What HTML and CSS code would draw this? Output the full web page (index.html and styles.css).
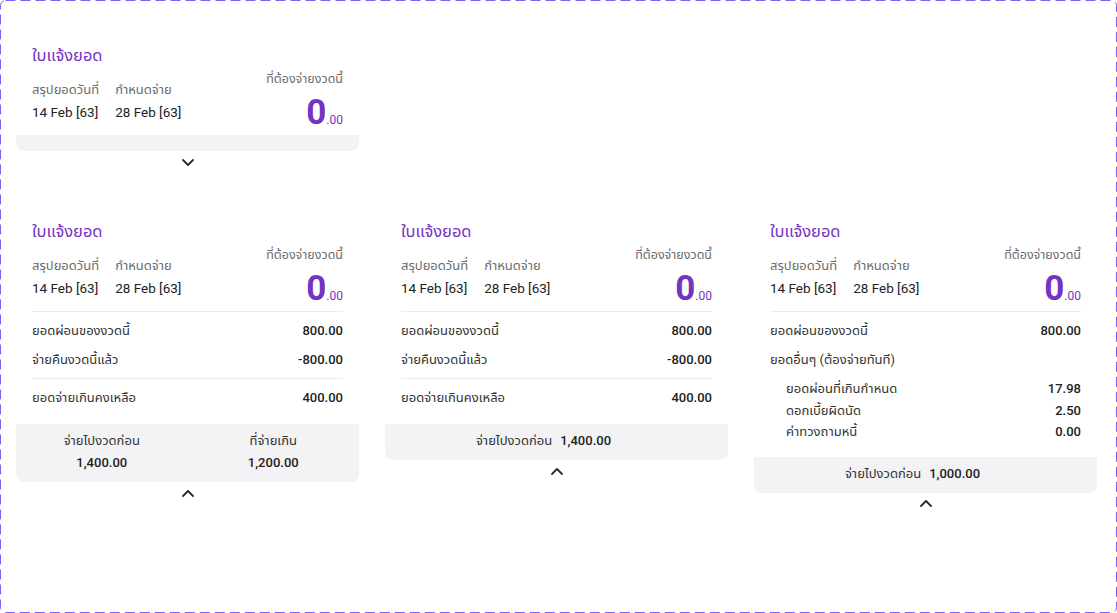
FILE: index.html
```html
<!DOCTYPE html>
<html lang="th">
<head>
  <meta charset="UTF-8" />
  <meta name="viewport" content="width=device-width, initial-scale=1.0"/>
  <title>ใบแจ้งยอด</title>
  <link rel="stylesheet" href="styles.css">
</head>
<body>
  <div class="frame">
    <svg class="frame-border" width="1117" height="613" viewBox="0 0 1117 613">
      <rect x="0.5" y="0.5" width="1116" height="612" rx="5" ry="5" fill="none" stroke="#7b61ff" stroke-width="1" stroke-dasharray="10 5"/>
    </svg>

    <div class="grid">
      <!-- collapsed -->
      <div class="card">
        <div class="card-body">
          <div class="title">ใบแจ้งยอด</div>
          <div class="head">
            <div class="dates">
              <div class="date-col">
                <div class="label">สรุปยอดวันที่</div>
                <div class="date">14 Feb [63]</div>
              </div>
              <div class="date-col">
                <div class="label">กำหนดจ่าย</div>
                <div class="date">28 Feb [63]</div>
              </div>
            </div>
            <div class="due">
              <div class="label">ที่ต้องจ่ายงวดนี้</div>
              <div class="amount">0<span class="dec">.00</span></div>
            </div>
          </div>
        </div>
        <div class="card-foot empty"></div>
        <div class="toggle">
          <svg width="14" height="9" viewBox="0 0 14 9"><path d="M2 2 L7 7 L12 2" fill="none" stroke="#2b2b2b" stroke-width="1.8" stroke-linecap="round" stroke-linejoin="round"/></svg>
        </div>
      </div>
      <div></div>
      <div></div>

      <!-- expanded 1 -->
      <div class="card">
        <div class="card-body">
          <div class="title">ใบแจ้งยอด</div>
          <div class="head">
            <div class="dates">
              <div class="date-col">
                <div class="label">สรุปยอดวันที่</div>
                <div class="date">14 Feb [63]</div>
              </div>
              <div class="date-col">
                <div class="label">กำหนดจ่าย</div>
                <div class="date">28 Feb [63]</div>
              </div>
            </div>
            <div class="due">
              <div class="label">ที่ต้องจ่ายงวดนี้</div>
              <div class="amount">0<span class="dec">.00</span></div>
            </div>
          </div>
          <div class="details">
            <div class="section">
              <div class="row"><span>ยอดผ่อนของงวดนี้</span><span class="val">800.00</span></div>
              <div class="row"><span>จ่ายคืนงวดนี้แล้ว</span><span class="val">-800.00</span></div>
            </div>
            <div class="section">
              <div class="row"><span>ยอดจ่ายเกินคงเหลือ</span><span class="val">400.00</span></div>
            </div>
          </div>
        </div>
        <div class="card-foot split">
          <div class="foot-col">
            <div class="foot-label">จ่ายไปงวดก่อน</div>
            <div class="val">1,400.00</div>
          </div>
          <div class="foot-col">
            <div class="foot-label">ที่จ่ายเกิน</div>
            <div class="val">1,200.00</div>
          </div>
        </div>
        <div class="toggle">
          <svg width="14" height="9" viewBox="0 0 14 9"><path d="M2 7 L7 2 L12 7" fill="none" stroke="#2b2b2b" stroke-width="1.8" stroke-linecap="round" stroke-linejoin="round"/></svg>
        </div>
      </div>

      <!-- expanded 2 -->
      <div class="card">
        <div class="card-body">
          <div class="title">ใบแจ้งยอด</div>
          <div class="head">
            <div class="dates">
              <div class="date-col">
                <div class="label">สรุปยอดวันที่</div>
                <div class="date">14 Feb [63]</div>
              </div>
              <div class="date-col">
                <div class="label">กำหนดจ่าย</div>
                <div class="date">28 Feb [63]</div>
              </div>
            </div>
            <div class="due">
              <div class="label">ที่ต้องจ่ายงวดนี้</div>
              <div class="amount">0<span class="dec">.00</span></div>
            </div>
          </div>
          <div class="details">
            <div class="section">
              <div class="row"><span>ยอดผ่อนของงวดนี้</span><span class="val">800.00</span></div>
              <div class="row"><span>จ่ายคืนงวดนี้แล้ว</span><span class="val">-800.00</span></div>
            </div>
            <div class="section">
              <div class="row"><span>ยอดจ่ายเกินคงเหลือ</span><span class="val">400.00</span></div>
            </div>
          </div>
        </div>
        <div class="card-foot inline">
          <span class="foot-label">จ่ายไปงวดก่อน</span>
          <span class="val">1,400.00</span>
        </div>
        <div class="toggle">
          <svg width="14" height="9" viewBox="0 0 14 9"><path d="M2 7 L7 2 L12 7" fill="none" stroke="#2b2b2b" stroke-width="1.8" stroke-linecap="round" stroke-linejoin="round"/></svg>
        </div>
      </div>

      <!-- expanded 3 -->
      <div class="card">
        <div class="card-body">
          <div class="title">ใบแจ้งยอด</div>
          <div class="head">
            <div class="dates">
              <div class="date-col">
                <div class="label">สรุปยอดวันที่</div>
                <div class="date">14 Feb [63]</div>
              </div>
              <div class="date-col">
                <div class="label">กำหนดจ่าย</div>
                <div class="date">28 Feb [63]</div>
              </div>
            </div>
            <div class="due">
              <div class="label">ที่ต้องจ่ายงวดนี้</div>
              <div class="amount">0<span class="dec">.00</span></div>
            </div>
          </div>
          <div class="details">
            <div class="section">
              <div class="row"><span>ยอดผ่อนของงวดนี้</span><span class="val">800.00</span></div>
              <div class="row"><span>ยอดอื่นๆ (ต้องจ่ายทันที)</span></div>
              <div class="sub">
                <div class="sub-row"><span>ยอดผ่อนที่เกินกำหนด</span><span class="val">17.98</span></div>
                <div class="sub-row"><span>ดอกเบี้ยผิดนัด</span><span class="val">2.50</span></div>
                <div class="sub-row"><span>ค่าทวงถามหนี้</span><span class="val">0.00</span></div>
              </div>
            </div>
          </div>
        </div>
        <div class="card-foot inline">
          <span class="foot-label">จ่ายไปงวดก่อน</span>
          <span class="val">1,000.00</span>
        </div>
        <div class="toggle">
          <svg width="14" height="9" viewBox="0 0 14 9"><path d="M2 7 L7 2 L12 7" fill="none" stroke="#2b2b2b" stroke-width="1.8" stroke-linecap="round" stroke-linejoin="round"/></svg>
        </div>
      </div>
    </div>
  </div>
</body>
</html>
```

FILE: styles.css
```css
* {
  box-sizing: border-box;
}
body {
  margin: 0;
  font-family: Roboto, "Noto Sans Thai", "Noto Sans", sans-serif;
  color: #222;
  background: #fff;
}
.frame {
  position: relative;
  width: 1117px;
  height: 613px;
  padding: 32px 16px;
}
.frame-border {
  position: absolute;
  left: 0;
  top: 0;
  pointer-events: none;
}
.grid {
  display: grid;
  grid-template-columns: repeat(3, 343px);
  column-gap: 26px;
  row-gap: 35px;
  align-items: start;
}
.card {
  background: #fff;
}
.card-body {
  padding: 13px 16px 0;
}
.title {
  font-size: 16.5px;
  line-height: 22px;
  color: #7433c3;
}
.head {
  display: flex;
  justify-content: space-between;
  align-items: flex-end;
  margin: 2px 0 4px;
}
.dates {
  display: flex;
  gap: 16px;
  padding-bottom: 9px;
}
.label {
  font-size: 13px;
  line-height: 20px;
  color: #6b6b6b;
}
.due .label {
  font-size: 12.5px;
}
.date {
  font-size: 13.5px;
  line-height: 20px;
  margin-top: 2px;
  color: #222;
}
.due {
  text-align: right;
}
.amount {
  font-size: 35px;
  line-height: 36px;
  font-weight: 700;
  color: #7433c3;
  margin-top: 6px;
}
.dec {
  font-size: 12px;
  line-height: 1;
  font-weight: 400;
}
.details {
  padding-bottom: 8px;
}
.section {
  border-top: 1px solid #ececec;
  padding: 4px 0;
}
.row,
.sub-row {
  display: flex;
  justify-content: space-between;
  font-size: 13px;
  color: #333;
}
.row {
  line-height: 21px;
  padding: 4px 0;
}
.sub {
  padding: 4px 0 2px 16px;
}
.sub-row {
  line-height: 21.5px;
}
.val {
  font-weight: 500;
  font-size: 13px;
  color: #222;
}
.card-foot {
  background: #f3f2f5;
  border-radius: 0 0 8px 8px;
  font-size: 13px;
}
.card-foot.empty {
  height: 16px;
}
.card-foot.split {
  display: grid;
  grid-template-columns: 1fr 1fr;
  padding: 6px 0 8px;
  text-align: center;
  line-height: 22px;
}
.card-foot.inline {
  display: flex;
  justify-content: center;
  gap: 8px;
  padding: 6px 26px 8px 0;
  line-height: 22px;
}
.foot-label {
  color: #333;
}
.toggle {
  display: flex;
  justify-content: center;
  align-items: center;
  height: 22px;
}
.toggle svg {
  display: block;
}
```
